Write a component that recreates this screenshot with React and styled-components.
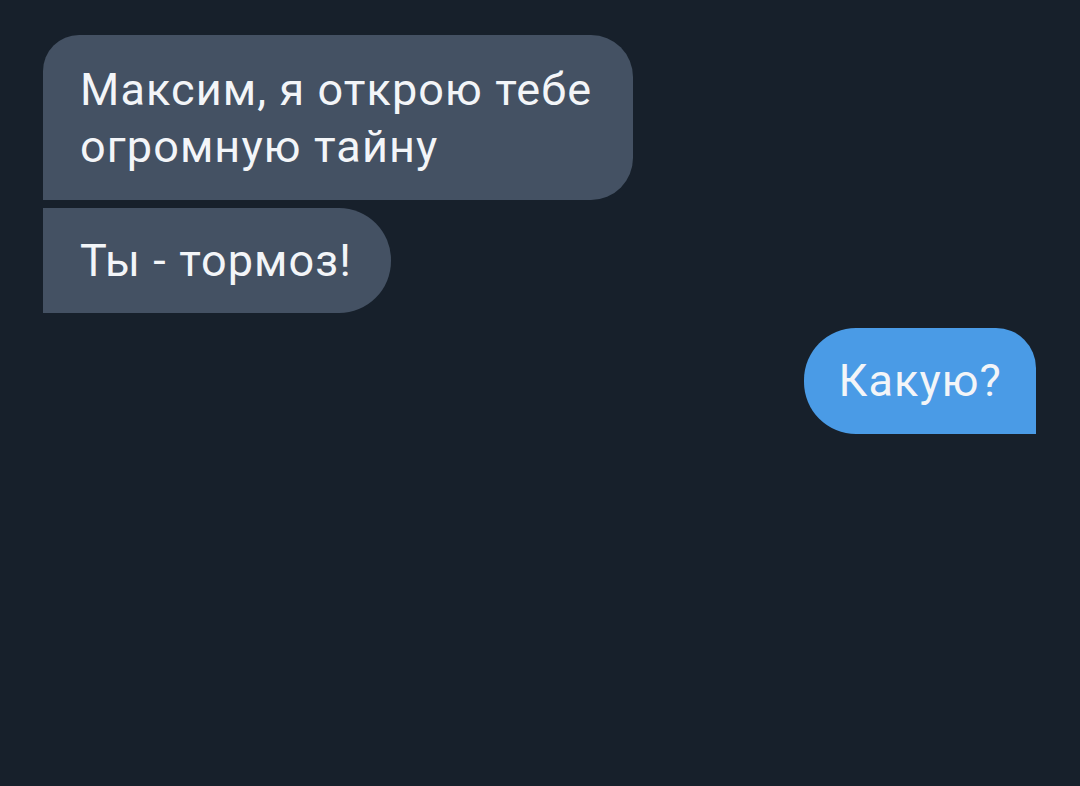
import React from 'react';
import styled, { createGlobalStyle } from 'styled-components';

const GlobalStyle = createGlobalStyle`
    html, body {
        margin: 0;
        padding: 0;
        background-color: #17202b;
    }
`;

const Chat = styled.div`
    display: flex;
    flex-direction: column;
    width: 1080px;
    height: 786px;
    box-sizing: border-box;
    padding: 35px 44px 0 43px;
    background-color: #17202b;
    font-family: Roboto, "Noto Sans", sans-serif;
`;

const Bubble = styled.div`
    align-self: ${(p) => (p.$mine ? 'flex-end' : 'flex-start')};
    box-sizing: border-box;
    max-width: 590px;
    padding: ${(p) => p.$pad || '24px 39px 24px 37px'};
    margin-top: ${(p) => p.$gap || 0}px;
    background-color: ${(p) => (p.$mine ? '#4a9be6' : '#445163')};
    color: #f3f5f8;
    font-size: 45px;
    font-weight: 400;
    line-height: 57px;
    letter-spacing: 1.1px;
    border-radius: ${(p) => p.$radius};
`;

const App = () => {
    return (
        <>
            <GlobalStyle />
            <Chat>
                <Bubble $pad="26px 30px 25px 37px" $radius="36px 42px 42px 0">
                    Максим, я открою тебе огромную тайну
                </Bubble>
                <Bubble $gap={8} $radius="0 52px 52px 0">
                    Ты - тормоз!
                </Bubble>
                <Bubble $mine $gap={15} $pad="24px 34px 25px 34px" $radius="52px 40px 0 52px">
                    Какую?
                </Bubble>
            </Chat>
        </>
    );
};

export default App;
